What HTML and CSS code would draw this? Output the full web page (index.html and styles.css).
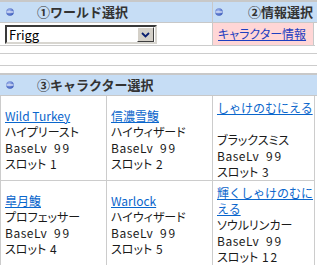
FILE: index.html
```html
<!DOCTYPE html>
<html lang="ja">
<head>
<meta charset="utf-8">
<link rel="stylesheet" href="styles.css">
</head>
<body>
<svg class="defs" width="0" height="0"><defs><radialGradient id="g1" cx="0.4" cy="0.35" r="0.75"><stop offset="0" stop-color="#a9bdf0"/><stop offset="1" stop-color="#2c4db5"/></radialGradient></defs></svg>

<section class="top">
  <div class="hdrow two">
    <div class="hd"><svg class="ico" width="8" height="8" viewBox="0 0 8 8"><circle cx="4" cy="4" r="3.8" fill="url(#g1)"/><rect x="0.6" y="3.4" width="6.8" height="1.2" fill="#e3eafb"/></svg><span>①ワールド選択</span></div>
    <div class="hd sep"><svg class="ico" width="8" height="8" viewBox="0 0 8 8"><circle cx="4" cy="4" r="3.8" fill="url(#g1)"/><rect x="0.6" y="3.4" width="6.8" height="1.2" fill="#e3eafb"/></svg><span>②情報選択</span></div>
  </div>
  <div class="toprow">
    <div class="sel-cell">
      <div class="select"><span class="sel-val">Frigg</span><span class="sel-btn"><svg width="9" height="6" viewBox="0 0 9 6"><path d="M1 1 L4.5 4.5 L8 1" fill="none" stroke="#0a1f6e" stroke-width="1.8"/></svg></span></div>
    </div>
    <div class="info"><a href="#">キャラクター情報</a></div>
  </div>
</section>

<div class="rule r1"></div>
<div class="rule r2"></div>

<section class="chars">
  <div class="hdrow">
    <div class="hd"><svg class="ico" width="8" height="8" viewBox="0 0 8 8"><circle cx="4" cy="4" r="3.8" fill="url(#g1)"/><rect x="0.6" y="3.4" width="6.8" height="1.2" fill="#e3eafb"/></svg><span>③キャラクター選択</span></div>
  </div>
  <div class="grid">
    <div class="cell"><div class="txt"><a href="#">Wild Turkey</a><br><span class="kana">ハイプリースト</span><br><span class="lbl">BaseLv</span> <span class="num lv">99</span><br><span class="kana">スロット</span> <span class="num">1</span></div></div>
    <div class="cell"><div class="txt"><a href="#">信濃雪鰒</a><br><span class="kana">ハイウィザード</span><br><span class="lbl">BaseLv</span> <span class="num lv">99</span><br><span class="kana">スロット</span> <span class="num">2</span></div></div>
    <div class="cell"><div class="txt"><a href="#">しゃけのむにえる</a><br><br><span class="kana">ブラックスミス</span><br><span class="lbl">BaseLv</span> <span class="num lv">99</span><br><span class="kana">スロット</span> <span class="num">3</span></div></div>
    <div class="cell"><div class="txt"><a href="#">皐月鰒</a><br><span class="kana">プロフェッサー</span><br><span class="lbl">BaseLv</span> <span class="num lv">99</span><br><span class="kana">スロット</span> <span class="num">4</span></div></div>
    <div class="cell"><div class="txt"><a href="#">Warlock</a><br><span class="kana">ハイウィザード</span><br><span class="lbl">BaseLv</span> <span class="num lv">99</span><br><span class="kana">スロット</span> <span class="num">5</span></div></div>
    <div class="cell"><div class="txt"><a href="#">輝くしゃけのむにえる</a><br><span class="kana">ソウルリンカー</span><br><span class="lbl">BaseLv</span> <span class="num lv">99</span><br><span class="kana">スロット</span> <span class="num">12</span></div></div>
  </div>
</section>
</body>
</html>
```

FILE: styles.css
```css
html, body {
  margin: 0;
  padding: 0;
  background: #fff;
}
body {
  font-family: "Noto Sans CJK JP", "Noto Sans", sans-serif;
  font-size: 12px;
  color: #1a1a1a;
  width: 317px;
  overflow: hidden;
}
.defs { position: absolute; }

/* header bars */
.hdrow {
  display: grid;
  grid-template-columns: 1fr;
  background: #c6ddf5;
  border-top: 2px solid #c8c8c8;
  border-bottom: 1px solid #c8c8c8;
  height: 20px;
}
.hdrow.two {
  grid-template-columns: 212px 1fr;
}
.hd {
  display: flex;
  align-items: center;
  gap: 23px;
  padding-left: 6px;
  font-size: 13px;
  font-weight: bold;
  color: #333;
  white-space: nowrap;
  overflow: hidden;
  line-height: 20px;
}
.hd.sep {
  border-left: 1px solid #c8c8c8;
  padding-left: 2px;
  gap: 25px;
}
.ico { flex: none; }

/* top row */
.toprow {
  display: grid;
  grid-template-columns: 212px 102px;
  height: 22px;
  width: 315px;
  border-bottom: 1px solid #cccccc;
}
.sel-cell {
  padding: 2px 0 0 5px;
}
.select {
  display: flex;
  align-items: center;
  box-sizing: border-box;
  width: 152px;
  height: 19px;
  background: #fff;
  border-top: 2px solid #3a3a3a;
  border-left: 2px solid #3a3a3a;
  border-right: 2px solid #d8d6d0;
  border-bottom: 2px solid #d8d6d0;
}
.sel-val {
  flex: 1;
  padding-left: 2px;
  font-size: 13px;
  line-height: 15px;
  color: #000;
}
.sel-btn {
  flex: none;
  display: flex;
  align-items: center;
  justify-content: center;
  box-sizing: border-box;
  width: 17px;
  height: 15px;
  margin-right: 1px;
  background: #d4d0c8;
  border-top: 1px solid #ffffff;
  border-left: 1px solid #ffffff;
  border-right: 1px solid #404040;
  border-bottom: 1px solid #404040;
}
.info {
  background: #ffd6d6;
  border-left: 1px solid #c8c8c8;
  border-right: 1px solid #c8c8c8;
  padding-left: 5px;
  white-space: nowrap;
  line-height: 22px;
}
.info a {
  color: #1e3fc0;
  font-size: 12px;
  font-feature-settings: "palt";
}

/* rules */
.rule {
  height: 0;
  border-top: 1px solid #cccccc;
}
.r1 { margin-top: 7px; }
.r2 { margin-top: 11px; margin-bottom: 7px; }

/* character grid */
.grid {
  display: grid;
  grid-template-columns: 106px 106px 102px;
  width: 314px;
  border-left: 1px solid #cccccc;
}
.cell {
  display: flex;
  flex-direction: column;
  justify-content: center;
  padding: 4px 0 0 4px;
  border-right: 1px solid #cccccc;
  border-bottom: 1px solid #cccccc;
  line-height: 16px;
}
.cell a {
  color: #0a66cc;
}
.kana {
  font-feature-settings: "palt";
}
.lbl {
  letter-spacing: 0.5px;
}
.num {
  letter-spacing: 2px;
  padding-left: 1px;
}
.num.lv {
  padding-left: 4px;
}
```
